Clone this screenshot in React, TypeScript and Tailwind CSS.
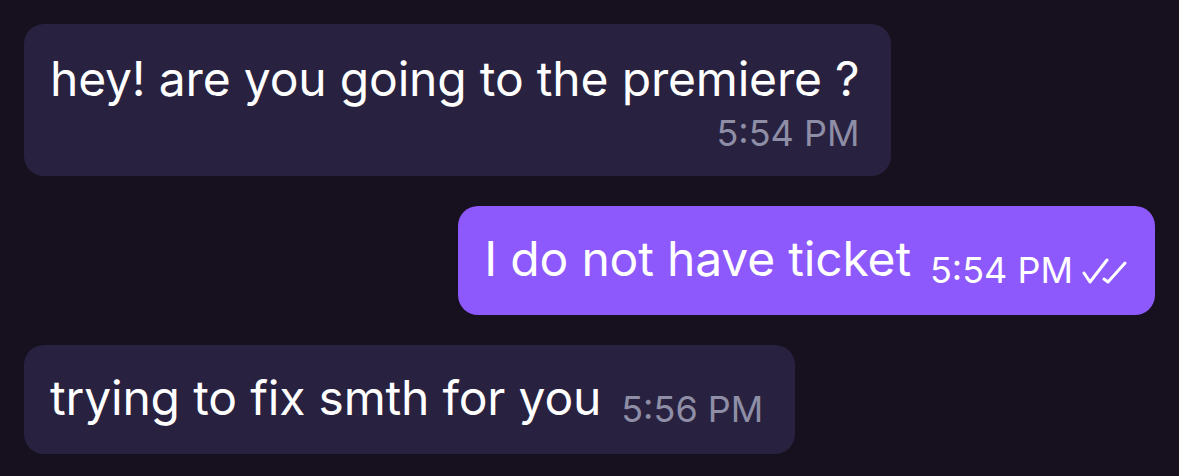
import React from "react";

const font = { fontFamily: "Inter, 'Noto Sans', sans-serif" };

function Checks() {
  return (
    <svg width="46" height="28" viewBox="0 0 46 28" fill="none" stroke="white" strokeWidth="3" strokeLinecap="round" strokeLinejoin="round" className="ml-[9px] mb-[3px]">
      <polyline points="2,16 8,25 25,3" />
      <polyline points="22,22 26,25 43,6" />
    </svg>
  );
}

export default function App() {
  return (
    <div className="w-[1179px] h-[476px] bg-[#17111f] px-[24px] pt-[24px] flex flex-col gap-[30px] text-white" style={font}>
      <div className="self-start bg-[#282240] rounded-[20px] pl-[26px] pr-[32px] pt-[26px] pb-[25px] flex flex-col">
        <div className="text-[48px] leading-[58px] tracking-[-0.18px]">hey! are you going to the premiere ?</div>
        <div className="self-end mt-[8px] text-[36px] leading-[35px] text-[#8e8ea6]">5:54 PM</div>
      </div>
      <div className="self-end bg-[#8d58fc] rounded-[20px] pl-[26px] pr-[27px] pt-[24px] pb-[27px] flex items-end">
        <div className="text-[48px] leading-[58px] tracking-[-0.18px]">I do not have ticket</div>
        <div className="ml-[19px] text-[36px] leading-[35px] text-white">5:54 PM</div>
        <Checks />
      </div>
      <div className="self-start bg-[#282240] rounded-[20px] pl-[26px] pr-[32px] pt-[24px] pb-[27px] flex items-end">
        <div className="text-[48px] leading-[58px] tracking-[-0.18px]">trying to fix smth for you</div>
        <div className="ml-[20px] text-[36px] leading-[35px] text-[#8e8ea6]">5:56 PM</div>
      </div>
    </div>
  );
}
